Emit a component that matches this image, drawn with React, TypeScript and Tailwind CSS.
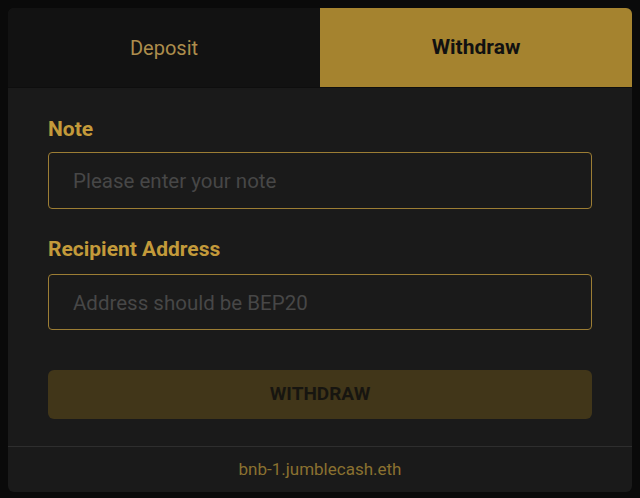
import { useState } from "react";

const App = () => {
  const [tab, setTab] = useState<"deposit" | "withdraw">("withdraw");
  const [note, setNote] = useState("");
  const [address, setAddress] = useState("");

  return (
    <div className="w-[640px] h-[498px] bg-[#0a0a0a] p-2 font-['Roboto',sans-serif]">
      <div className="h-[484px] rounded-md overflow-hidden bg-[#1a1a1a] flex flex-col">
        {/* Tabs */}
        <div className="flex h-[80px] border-b border-[#0e0e0e]">
          <button
            onClick={() => setTab("deposit")}
            className={`flex-1 text-[20px] ${tab === "deposit" ? "bg-[#a5832f] text-[#111] font-bold" : "bg-[#121212] text-[#ad8d4c]"}`}
          >
            Deposit
          </button>
          <button
            onClick={() => setTab("withdraw")}
            className={`flex-1 text-[21px] ${tab === "withdraw" ? "bg-[#a5832f] text-[#111] font-bold" : "bg-[#121212] text-[#ad8d4c]"}`}
          >
            Withdraw
          </button>
        </div>

        {/* Form */}
        <div className="flex-1 px-10 pt-[27px]">
          <label className="block text-[21px] leading-7 font-bold text-[#c39a3a]">Note</label>
          <input
            value={note}
            onChange={(e) => setNote(e.target.value)}
            placeholder="Please enter your note"
            className="mt-[9px] w-full h-[57px] rounded-[4px] border border-[#9c7d34] bg-[#1a1a1a] px-6 pt-px text-[20.5px] text-[#ddd] placeholder:text-[#474747] outline-none"
          />

          <label className="block mt-[26px] text-[21px] leading-7 font-bold text-[#c39a3a]">Recipient Address</label>
          <input
            value={address}
            onChange={(e) => setAddress(e.target.value)}
            placeholder="Address should be BEP20"
            className="mt-[11px] w-full h-[56px] rounded-[4px] border border-[#9c7d34] bg-[#1a1a1a] px-6 pt-px text-[20.5px] text-[#ddd] placeholder:text-[#474747] outline-none"
          />

          <button className="mt-[40px] w-full h-[49px] rounded-md bg-[#413619] text-[19px] font-bold text-[#171510]">
            WITHDRAW
          </button>
        </div>

        {/* Footer */}
        <div className="h-[46px] border-t border-[#2e2e2e] flex items-center justify-center text-[17px] text-[#8a7130]">
          bnb-1.jumblecash.eth
        </div>
      </div>
    </div>
  );
};

export default App;
